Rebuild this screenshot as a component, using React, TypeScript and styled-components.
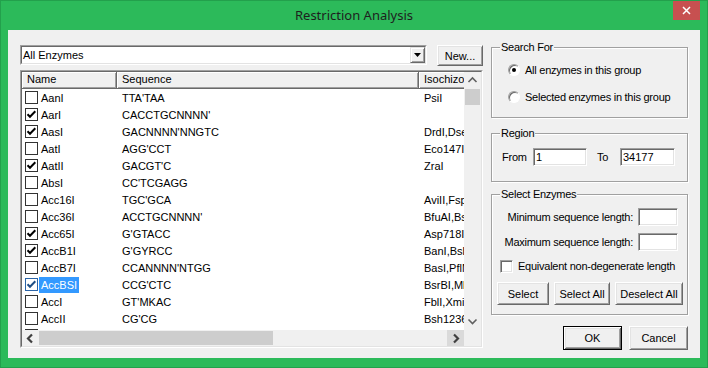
import React from "react";
import styled, { createGlobalStyle } from "styled-components";

const GlobalStyle = createGlobalStyle`
  html, body {
    margin: 0;
    padding: 0;
  }
  body {
    width: 708px;
    height: 368px;
    overflow: hidden;
    background: #2cba5a;
  }
  *, *::before, *::after {
    box-sizing: border-box;
  }
`;

const SANS = `"Liberation Sans", Arial, sans-serif`;

type Enzyme = {
  name: string;
  seq: string;
  iso: string;
  checked: boolean;
  selected?: boolean;
};

const enzymes: Enzyme[] = [
  { name: "AanI", seq: "TTA'TAA", iso: "PsiI", checked: false },
  { name: "AarI", seq: "CACCTGCNNNN'", iso: "", checked: true },
  { name: "AasI", seq: "GACNNNN'NNGTC", iso: "DrdI,DseDI", checked: true },
  { name: "AatI", seq: "AGG'CCT", iso: "Eco147I", checked: false },
  { name: "AatII", seq: "GACGT'C", iso: "ZraI", checked: true },
  { name: "AbsI", seq: "CC'TCGAGG", iso: "", checked: false },
  { name: "Acc16I", seq: "TGC'GCA", iso: "AviII,FspI", checked: false },
  { name: "Acc36I", seq: "ACCTGCNNNN'", iso: "BfuAI,BspMI", checked: false },
  { name: "Acc65I", seq: "G'GTACC", iso: "Asp718I", checked: true },
  { name: "AccB1I", seq: "G'GYRCC", iso: "BanI,BshNI", checked: true },
  { name: "AccB7I", seq: "CCANNNN'NTGG", iso: "BasI,PflMI", checked: false },
  { name: "AccBSI", seq: "CCG'CTC", iso: "BsrBI,MbiI", checked: true, selected: true },
  { name: "AccI", seq: "GT'MKAC", iso: "FblI,XmiI", checked: false },
  { name: "AccII", seq: "CG'CG", iso: "Bsh1236I", checked: false },
  { name: "AccIII", seq: "T'CCGGA", iso: "BseAI,BsiMI", checked: false },
];

const COLS = "95px 302px 140px";

const Window = styled.div`
  width: 708px;
  height: 368px;
  display: flex;
  flex-direction: column;
  background: #2cba5a;
  border: 1px solid #23a04c;
  font-family: ${SANS};
  font-size: 11px;
  color: #000;
`;

const TitleBar = styled.div`
  height: 29px;
  flex-shrink: 0;
  display: grid;
  grid-template-columns: 1fr auto 1fr;
`;

const Title = styled.div`
  grid-column: 2;
  font-family: "Noto Sans", "Open Sans", sans-serif;
  font-size: 13px;
  line-height: 29px;
  color: #1e1e1e;
`;

const CloseButton = styled.div`
  grid-column: 3;
  justify-self: end;
  width: 27px;
  height: 19px;
  margin-right: 7px;
  background: #c75050;
  display: flex;
  align-items: center;
  justify-content: center;
`;

const Client = styled.div`
  flex: 1;
  min-height: 0;
  margin: 0 7px 9px;
  background: #f0f0f0;
  display: flex;
  gap: 8px;
  padding: 11px 12px 10px;
`;

const LeftColumn = styled.div`
  width: 463px;
  display: flex;
  flex-direction: column;
  padding-top: 4px;
`;

const ComboRow = styled.div`
  display: flex;
  gap: 10px;
  height: 21px;
  flex-shrink: 0;
`;

const Sunken = styled.div`
  border: 1px solid;
  border-color: #a0a0a0 #ffffff #ffffff #a0a0a0;
`;

const SunkenInner = styled.div`
  height: 100%;
  border: 1px solid;
  border-color: #696969 #e3e3e3 #e3e3e3 #696969;
  background: #ffffff;
`;

const Combo = styled(Sunken)`
  width: 407px;
  height: 20px;
`;

const ComboField = styled(SunkenInner)`
  display: flex;
  align-items: center;
  padding-left: 1px;
`;

const ComboText = styled.span`
  flex: 1;
  line-height: 16px;
`;

const DropButton = styled.div`
  width: 15px;
  height: 100%;
  background: #f0f0f0;
  border: 1px solid;
  border-color: #e3e3e3 #696969 #696969 #e3e3e3;
  box-shadow: inset 1px 1px #ffffff, inset -1px -1px #a0a0a0;
  display: flex;
  align-items: center;
  justify-content: center;
`;

const Button = styled.button<{ $w: number; $h?: number; $default?: boolean }>`
  width: ${({ $w }) => $w}px;
  height: ${({ $h = 21 }) => $h}px;
  margin: 0;
  padding: 0;
  font-family: ${SANS};
  font-size: 11px;
  letter-spacing: 0;
  color: #000;
  background: #f0f0f0;
  border: 1px solid;
  border-color: ${({ $default }) =>
    $default ? "#000000" : "#ffffff #696969 #696969 #ffffff"};
  box-shadow: ${({ $default }) =>
    $default
      ? "inset 1px 1px #ffffff, inset -1px -1px #696969, inset 2px 2px #e3e3e3, inset -2px -2px #a0a0a0"
      : "inset 1px 1px #e3e3e3, inset -1px -1px #a0a0a0"};
  flex-shrink: 0;
`;

const ListFrame = styled(Sunken)`
  flex: 1;
  min-height: 0;
  margin-top: 4px;
`;

const ListBody = styled(SunkenInner)`
  display: grid;
  grid-template-columns: minmax(0, 1fr) 17px;
  grid-template-rows: minmax(0, 1fr) 16px;
  overflow: hidden;
`;

const ListMain = styled.div`
  overflow: hidden;
  min-height: 0;
`;

const HeaderRow = styled.div`
  display: grid;
  grid-template-columns: ${COLS};
  height: 17px;
`;

const HeaderCell = styled.div`
  padding-left: 5px;
  line-height: 15px;
  background: #f0f0f0;
  border-right: 1px solid #696969;
  border-bottom: 1px solid #696969;
  box-shadow: inset 1px 1px #ffffff, inset -1px -1px #a0a0a0;
  white-space: nowrap;
  overflow: hidden;
`;

const Row = styled.div`
  display: grid;
  grid-template-columns: ${COLS};
  height: 17px;
  align-items: center;
  white-space: nowrap;
`;

const NameCell = styled.div`
  display: flex;
  align-items: center;
  gap: 1px;
  padding-left: 3px;
`;

const NameLabel = styled.span<{ $selected?: boolean }>`
  padding: 0 2px;
  line-height: 16px;
  background: ${({ $selected }) => ($selected ? "#3399ff" : "transparent")};
  color: ${({ $selected }) => ($selected ? "#ffffff" : "#000000")};
`;

const TextCell = styled.div`
  padding-left: 5px;
  overflow: hidden;
`;

const ListCheck = styled.span<{ $focus?: boolean }>`
  width: 13px;
  height: 13px;
  flex-shrink: 0;
  border: 1px solid ${({ $focus }) => ($focus ? "#2a64a8" : "#333333")};
  background: #ffffff;
  display: inline-flex;
  align-items: center;
  justify-content: center;
`;

const VScroll = styled.div`
  grid-row: 1;
  grid-column: 2;
  display: flex;
  flex-direction: column;
  min-height: 0;
  background: #f0f0f0;
`;

const ScrollArrow = styled.div<{ $shade?: boolean }>`
  width: 17px;
  height: 17px;
  flex-shrink: 0;
  display: flex;
  align-items: center;
  justify-content: center;
  background: ${({ $shade }) => ($shade ? "#dadada" : "#f0f0f0")};
`;

const VThumb = styled.div`
  height: 16px;
  flex-shrink: 0;
  margin: 0 1px;
  background: #cdcdcd;
`;

const Track = styled.div`
  flex: 1;
`;

const HScroll = styled.div`
  grid-row: 2;
  grid-column: 1;
  display: flex;
  align-items: center;
  background: #f0f0f0;
`;

const HThumb = styled.div<{ $w: number }>`
  width: ${({ $w }) => $w}px;
  height: 14px;
  background: #cdcdcd;
`;

const Corner = styled.div`
  grid-row: 2;
  grid-column: 2;
  background: #f0f0f0;
`;

const RightColumn = styled.div`
  width: 197px;
  display: flex;
  flex-direction: column;
  letter-spacing: -0.25px;
  white-space: nowrap;
`;

const Group = styled.fieldset<{ $gap?: number }>`
  margin: ${({ $gap = 0 }) => $gap}px 0 0;
  padding: 0;
  min-width: 0;
  border: 1px solid #a0a0a0;
  box-shadow: inset 1px 1px #ffffff, 1px 1px #ffffff;
`;

const Legend = styled.legend`
  margin-left: 8px;
  padding: 0 1px;
  line-height: 13px;
  background: #f0f0f0;
`;

const SearchBody = styled.div`
  display: flex;
  flex-direction: column;
  gap: 11px;
  padding: 8px 0 12px 16px;
`;

const OptionRow = styled.div`
  display: flex;
  align-items: center;
  gap: 5px;
  height: 16px;
`;

const Radio = styled.span`
  width: 12px;
  height: 12px;
  border-radius: 50%;
  border: 1px solid;
  border-color: #a0a0a0 #ffffff #ffffff #a0a0a0;
  box-shadow: inset 1px 1px #696969;
  background: #ffffff;
  display: flex;
  align-items: center;
  justify-content: center;
`;

const RadioDot = styled.span`
  width: 4px;
  height: 4px;
  border-radius: 50%;
  background: #000000;
`;

const RegionBody = styled.div`
  display: grid;
  grid-template-columns: 31px 54px 33px 55px;
  align-items: center;
  height: 41px;
  padding: 8px 0 15px 10px;
`;

const RegionLabel = styled.span<{ $indent?: number }>`
  padding-left: ${({ $indent = 0 }) => $indent}px;
`;

const Field = styled.input<{ $w?: number }>`
  width: ${({ $w }) => ($w ? `${$w}px` : "100%")};
  height: 18px;
  margin: 0;
  padding: 0 2px;
  font-family: ${SANS};
  font-size: 11px;
  letter-spacing: 0;
  color: #000;
  background: #ffffff;
  border: 1px solid;
  border-color: #a0a0a0 #ffffff #ffffff #a0a0a0;
  box-shadow: inset 1px 1px #696969, inset -1px -1px #e3e3e3;
  outline: none;
`;

const EnzymeBody = styled.div`
  display: flex;
  flex-direction: column;
  padding: 7px 9px 9px 0;
`;

const LengthRow = styled.div<{ $gap?: number }>`
  display: flex;
  justify-content: flex-end;
  align-items: center;
  gap: 5px;
  margin-top: ${({ $gap = 0 }) => $gap}px;
`;

const CheckRow = styled.div`
  display: flex;
  align-items: center;
  gap: 5px;
  height: 16px;
  margin-top: 7px;
  padding-left: 8px;
`;

const SunkenCheck = styled.span`
  width: 13px;
  height: 13px;
  flex-shrink: 0;
  border: 1px solid;
  border-color: #a0a0a0 #ffffff #ffffff #a0a0a0;
  box-shadow: inset 1px 1px #696969, inset -1px -1px #e3e3e3;
  background: #ffffff;
`;

const ButtonRow = styled.div`
  display: flex;
  gap: 5px;
  margin-top: 8px;
  padding-left: 5px;
`;

const DialogButtons = styled.div`
  display: flex;
  justify-content: flex-end;
  gap: 7px;
  margin-top: 11px;
`;

const CheckMark: React.FC<{ color?: string }> = ({ color = "#000" }) => (
  <svg width="11" height="11" viewBox="0 0 11 11">
    <path d="M1.5 5.2 L4 7.8 L9.3 2.3" fill="none" stroke={color} strokeWidth="2" />
  </svg>
);

const Chevron: React.FC<{ dir: "up" | "down" | "left" | "right" }> = ({ dir }) => {
  const pts = {
    up: "4.5,10 8.5,6 12.5,10",
    down: "4.5,6.5 8.5,10.5 12.5,6.5",
    left: "10,4.5 6,8.5 10,12.5",
    right: "7,4.5 11,8.5 7,12.5",
  }[dir];
  const bold = dir === "left" || dir === "right";
  return (
    <svg width="17" height="17" viewBox="0 0 17 17">
      <polyline
        points={pts}
        fill="none"
        stroke={bold ? "#404040" : "#606060"}
        strokeWidth={bold ? 2.2 : 1.6}
      />
    </svg>
  );
};

export default function App() {
  return (
    <>
      <GlobalStyle />
      <Window>
        <TitleBar>
          <Title>Restriction Analysis</Title>
          <CloseButton>
            <svg width="9" height="9" viewBox="0 0 9 9">
              <path d="M1 1 L8 8 M8 1 L1 8" stroke="#ffffff" strokeWidth="1.5" />
            </svg>
          </CloseButton>
        </TitleBar>
        <Client>
          <LeftColumn>
            <ComboRow>
              <Combo>
                <ComboField>
                  <ComboText>All Enzymes</ComboText>
                  <DropButton>
                    <svg width="7" height="4" viewBox="0 0 7 4">
                      <polygon points="0,0 7,0 3.5,4" fill="#000" />
                    </svg>
                  </DropButton>
                </ComboField>
              </Combo>
              <Button $w={46}>New...</Button>
            </ComboRow>
            <ListFrame>
              <ListBody>
                <ListMain>
                  <HeaderRow>
                    <HeaderCell>Name</HeaderCell>
                    <HeaderCell>Sequence</HeaderCell>
                    <HeaderCell>Isochizomers</HeaderCell>
                  </HeaderRow>
                  {enzymes.map((e) => (
                    <Row key={e.name}>
                      <NameCell>
                        <ListCheck $focus={e.selected}>
                          {e.checked && <CheckMark color={e.selected ? "#1f4f86" : "#000"} />}
                        </ListCheck>
                        <NameLabel $selected={e.selected}>{e.name}</NameLabel>
                      </NameCell>
                      <TextCell>{e.seq}</TextCell>
                      <TextCell>{e.iso}</TextCell>
                    </Row>
                  ))}
                </ListMain>
                <VScroll>
                  <ScrollArrow>
                    <Chevron dir="up" />
                  </ScrollArrow>
                  <VThumb />
                  <Track />
                  <ScrollArrow>
                    <Chevron dir="down" />
                  </ScrollArrow>
                </VScroll>
                <HScroll>
                  <ScrollArrow>
                    <Chevron dir="left" />
                  </ScrollArrow>
                  <HThumb $w={234} />
                  <Track />
                  <ScrollArrow $shade>
                    <Chevron dir="right" />
                  </ScrollArrow>
                </HScroll>
                <Corner />
              </ListBody>
            </ListFrame>
          </LeftColumn>

          <RightColumn>
            <Group>
              <Legend>Search For</Legend>
              <SearchBody>
                <OptionRow>
                  <Radio>
                    <RadioDot />
                  </Radio>
                  All enzymes in this group
                </OptionRow>
                <OptionRow>
                  <Radio />
                  Selected enzymes in this group
                </OptionRow>
              </SearchBody>
            </Group>

            <Group $gap={9}>
              <Legend>Region</Legend>
              <RegionBody>
                <RegionLabel>From</RegionLabel>
                <Field defaultValue="1" readOnly />
                <RegionLabel $indent={10}>To</RegionLabel>
                <Field defaultValue="34177" readOnly />
              </RegionBody>
            </Group>

            <Group $gap={6}>
              <Legend>Select Enzymes</Legend>
              <EnzymeBody>
                <LengthRow>
                  Minimum sequence length:
                  <Field $w={40} readOnly />
                </LengthRow>
                <LengthRow $gap={7}>
                  Maximum sequence length:
                  <Field $w={40} readOnly />
                </LengthRow>
                <CheckRow>
                  <SunkenCheck />
                  Equivalent non-degenerate length
                </CheckRow>
                <ButtonRow>
                  <Button $w={52} $h={23}>Select</Button>
                  <Button $w={56} $h={23}>Select All</Button>
                  <Button $w={68} $h={23}>Deselect All</Button>
                </ButtonRow>
              </EnzymeBody>
            </Group>

            <DialogButtons>
              <Button $w={59} $h={24} $default>
                OK
              </Button>
              <Button $w={59} $h={24}>
                Cancel
              </Button>
            </DialogButtons>
          </RightColumn>
        </Client>
      </Window>
    </>
  );
}
